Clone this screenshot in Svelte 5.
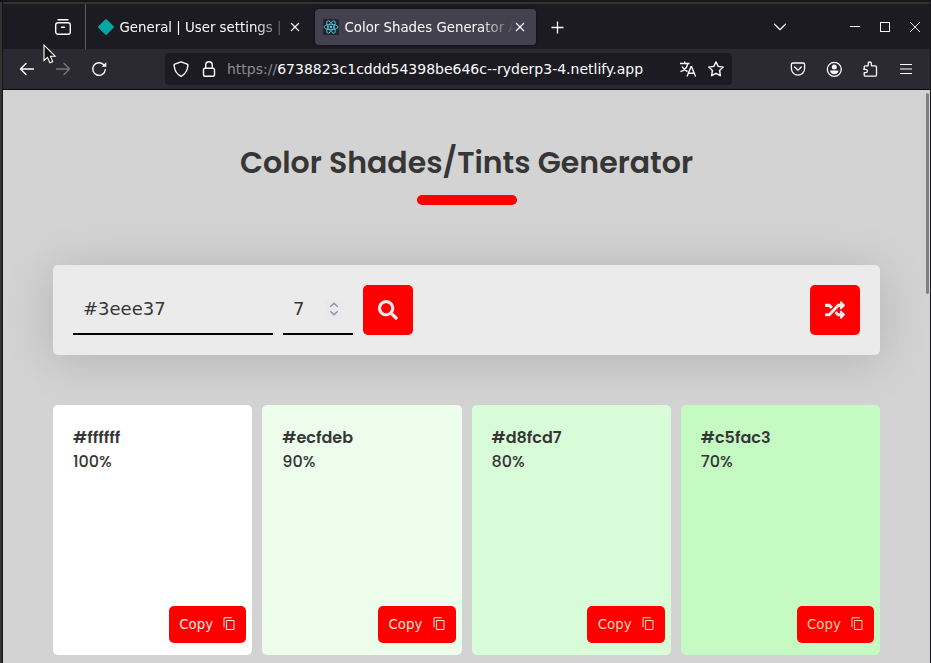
<script>
  const shades = [
    { hex: '#ffffff', weight: '100%', ink: '#f8e4e2' },
    { hex: '#ecfdeb', weight: '90%', ink: '#f2e3d0' },
    { hex: '#d8fcd7', weight: '80%', ink: '#f4d4bc' },
    { hex: '#c5fac3', weight: '70%', ink: '#f3cba8' }
  ];
</script>

<div class="window">
  <header class="tabs">
    <div class="view">
      <svg width="16" height="16" viewBox="0 0 16 16" fill="none" stroke="#fbfbfe" stroke-width="1.4" stroke-linecap="round"><path d="M3 .7h10M6.5 8.200h3" /><rect x=".7" y="3.700" width="14.6" height="11.500" rx="2.2" /></svg>
    </div>
    <div class="tab first">
      <svg width="16" height="16" viewBox="0 0 16 16"><path d="M7.2.5a1.2 1.2 0 0 1 1.6 0l6.8 6.7a1.2 1.2 0 0 1 0 1.6l-6.8 6.7a1.2 1.2 0 0 1-1.6 0L.4 8.8a1.2 1.2 0 0 1 0-1.6z" fill="#05a6a3" /></svg>
      <span class="label">General | User settings |</span>
      <svg class="close" width="10" height="10" viewBox="0 0 10 10" stroke="#fbfbfe" stroke-width="1.15"><path d="M1 1l8 8M9 1L1 9" /></svg>
    </div>
    <div class="tab active">
      <svg width="16" height="16" viewBox="0 0 16 16" fill="none" stroke="#61cde8" stroke-width=".8"><rect width="16" height="16" rx="1" fill="#20272b" stroke="none" /><ellipse cx="8" cy="8" rx="7" ry="2.7" /><ellipse cx="8" cy="8" rx="7" ry="2.7" transform="rotate(60 8 8)" /><ellipse cx="8" cy="8" rx="7" ry="2.7" transform="rotate(120 8 8)" /><circle cx="8" cy="8" r="1.2" fill="#61cde8" stroke="none" /></svg>
      <span class="label">Color Shades Generator A</span>
      <svg class="close" width="10" height="10" viewBox="0 0 10 10" stroke="#fbfbfe" stroke-width="1.15"><path d="M1 1l8 8M9 1L1 9" /></svg>
    </div>
    <svg class="plus" width="13" height="13" viewBox="0 0 13 13" stroke="#fbfbfe" stroke-width="1.3"><path d="M6.5 .5v12M.5 6.5h12" /></svg>
    <div class="controls">
      <svg width="14" height="8" viewBox="0 0 14 8" fill="none" stroke="#fbfbfe" stroke-width="1.3" stroke-linecap="round"><path d="M1.5 1.2L7 6.6l5.500-5.400" /></svg>
      <svg class="min" width="10" height="10" viewBox="0 0 10 10" stroke="#fff"><path d="M0 4.500h10" /></svg>
      <svg width="10" height="10" viewBox="0 0 10 10" fill="none" stroke="#fff"><rect x=".5" y=".5" width="9" height="9" /></svg>
      <svg width="10" height="10" viewBox="0 0 10 10" stroke="#fff" stroke-width=".9"><path d="M0 0l10 10M10 0L0 10" /></svg>
    </div>
  </header>

  <nav>
    <div class="history">
      <svg width="16" height="16" viewBox="0 0 16 16" fill="none" stroke="#fbfbfe" stroke-width="1.4" stroke-linecap="round" stroke-linejoin="round"><path d="M14.500 8H1.500M7 2.500L1.500 8 7 13.500" /></svg>
      <svg width="16" height="16" viewBox="0 0 16 16" fill="none" stroke="#76757e" stroke-width="1.4" stroke-linecap="round" stroke-linejoin="round"><path d="M1.500 8h13M9 2.500L14.500 8 9 13.500" /></svg>
      <svg width="16" height="16" viewBox="0 0 16 16" fill="none" stroke="#fbfbfe" stroke-width="1.4" stroke-linecap="round"><path d="M14.300 8.700a6.300 6.300 0 1 1-1.800-5.100" /><path d="M15.300 1.200v4.600h-4.600z" fill="#fbfbfe" stroke="none" /></svg>
    </div>
    <div class="address">
      <svg width="16" height="16" viewBox="0 0 16 16" fill="none" stroke="#fbfbfe" stroke-width="1.4" stroke-linejoin="round"><path d="M8 .8l6.200 2.300c.5.200.8.600.7 1.200-.3 4.800-2.600 8.900-6.900 11-4.300-2.100-6.600-6.200-6.900-11-.1-.6.200-1 .7-1.200z" /></svg>
      <svg class="lock" width="16" height="16" viewBox="0 0 16 16" fill="none" stroke="#fbfbfe" stroke-width="1.4"><rect x="2.500" y="7.200" width="11" height="8" rx="1.500" /><path d="M4.700 7V4a3.300 3.300 0 0 1 6.600 0v3" /></svg>
      <span class="url"><i>https://</i>6738823c1cddd54398be646c--ryderp3-4.netlify.app</span>
      <svg class="translate" width="16" height="16" viewBox="0 0 16 16" fill="none" stroke="#fbfbfe" stroke-width="1.4"><path d="M0 2.500h9.500M4.700.5v2M2 5.500c1 2 3.500 4 5.500 5M7.700 2.800C7 6.500 4 9.500.5 10.700M7 15.500l4-9.700h.6l4 9.700M8.500 12.300h5.500" /></svg>
      <svg width="16" height="16" viewBox="0 0 16 16" fill="none" stroke="#fbfbfe" stroke-width="1.4" stroke-linejoin="round"><path d="M8 .9l2.200 4.500 5 .7-3.600 3.500.8 5L8 12.300l-4.400 2.300.8-5L.8 6.100l5-.7z" /></svg>
    </div>
    <div class="tools">
      <svg width="16" height="16" viewBox="0 0 16 16" fill="none" stroke="#fbfbfe" stroke-width="1.3" stroke-linecap="round" stroke-linejoin="round"><path d="M2.900 2h10.200a1.500 1.500 0 0 1 1.500 1.500v4a6.600 6.600 0 0 1-13.200 0v-4A1.500 1.500 0 0 1 2.900 2z" /><path d="M4.700 6L8 9.200 11.300 6" /></svg>
      <svg width="16" height="16" viewBox="0 0 16 16"><circle cx="8.300" cy="8.300" r="7" fill="none" stroke="#fbfbfe" stroke-width="1.3" /><circle cx="8.300" cy="6.100" r="2.500" fill="#fbfbfe" /><path d="M4.500 9.600h7.600c.4 0 .5.300.4.700a4.500 4.500 0 0 1-8.400 0c-.1-.4 0-.7.400-.7z" fill="#fbfbfe" /></svg>
      <svg width="16" height="16" viewBox="0 0 16 16" fill="none" stroke="#fbfbfe" stroke-width="1.3" stroke-linejoin="round"><path d="M2.200 7.800V6c0-.8.400-1.200 1.200-1.200h2.800V2.600a1.600 1.600 0 0 1 3.200 0v2.200h3.800c.8 0 1.300.5 1.300 1.300v7.800c0 .8-.5 1.300-1.300 1.300H3.400c-.8 0-1.200-.5-1.200-1.200v-2.400h1.500a1.600 1.600 0 0 0 0-3.300H1.200" /></svg>
      <svg width="16" height="16" viewBox="0 0 16 16" stroke="#fbfbfe" stroke-width="1.2"><path d="M2 3.500h12M2 8h12M2 12.500h12" /></svg>
    </div>
  </nav>

  <main>
    <h1>Color Shades/Tints Generator</h1>
    <div class="underline"></div>
    <form class="panel">
      <div class="field color">#3eee37</div>
      <div class="field count">
        <span>7</span>
        <span class="spin"><svg width="10" height="14" viewBox="0 0 10 14" fill="none" stroke="#8f8f9d" stroke-width="1.400"><path d="M1.300 4.800L5 1.200l3.700 3.600M1.300 9.200L5 12.800l3.700-3.600" /></svg></span>
      </div>
      <button type="button" class="square" aria-label="Search">
        <svg width="20" height="20" viewBox="0 0 512 512" fill="#f4eaea"><path d="M505 442.700L405.300 343c-4.500-4.500-10.600-7-17-7H372c27.600-35.300 44-79.700 44-128C416 93.100 322.900 0 208 0S0 93.100 0 208s93.100 208 208 208c48.300 0 92.700-16.400 128-44v16.300c0 6.400 2.500 12.500 7 17l99.700 99.700c9.400 9.400 24.600 9.400 33.900 0l28.300-28.300c9.400-9.400 9.400-24.600.1-34zM208 336c-70.700 0-128-57.200-128-128 0-70.700 57.200-128 128-128 70.700 0 128 57.200 128 128 0 70.700-57.200 128-128 128z" /></svg>
      </button>
      <button type="button" class="square random" aria-label="Random color">
        <svg width="20" height="20" viewBox="0 0 512 512" fill="#f4eaea"><path d="M504.971 359.029c9.373 9.373 9.373 24.569 0 33.941l-80 79.984c-15.010 15.010-40.971 4.490-40.971-16.971V416h-58.785a12.004 12.004 0 0 1-8.773-3.812l-70.556-75.596 53.333-57.143L352 336h32v-39.981c0-21.438 25.943-31.998 40.971-16.971l80 79.981zM12 176h84l52.781 56.551 53.333-57.143-70.556-75.596A11.999 11.999 0 0 0 122.785 96H12c-6.627 0-12 5.373-12 12v56c0 6.627 5.373 12 12 12zm372 0v39.984c0 21.460 25.961 31.980 40.971 16.971l80-79.984c9.373-9.373 9.373-24.569 0-33.941l-80-79.981C409.943 24.021 384 34.582 384 56.019V96h-58.785a12.004 12.004 0 0 0-8.773 3.812L96 336H12c-6.627 0-12 5.373-12 12v56c0 6.627 5.373 12 12 12h110.785c3.326 0 6.503-1.381 8.773-3.812L352 176h32z" /></svg>
      </button>
    </form>
    <section class="cards">
      {#each shades as shade}
        <article style:background={shade.hex}>
          <h2>{shade.hex}</h2>
          <p>{shade.weight}</p>
          <button type="button" class="copy" style:color={shade.ink}>
            Copy
            <svg width="13" height="14" viewBox="0 0 13 14" fill="none" stroke="currentColor" stroke-width="1.100"><rect x="3.500" y="3.500" width="7.500" height="9" rx=".5" /><path d="M1 10.200V1.700q0-.9.900-.9h7" /></svg>
          </button>
        </article>
      {/each}
    </section>
    <div class="scrollbar"></div>
  </main>

  <svg class="cursor" width="14" height="21" viewBox="0 0 14 21"><path d="M1 1v15.500l3.500-3.200 2.400 5.500 2.800-1.200-2.300-5.400h4.700z" fill="#111" stroke="#fff" stroke-width="1.100" /></svg>
</div>

<style>
  :global(body) { margin: 0; background: #111; }
  .window {
    box-sizing: border-box; position: relative; width: 931px; height: 663px; overflow: hidden;
    padding: 2px 1px 0 0; background: #161618;
    display: flex; flex-direction: column;
    font-family: "DejaVu Sans", sans-serif;
  }
  svg { display: block; flex: none; }
  .tabs, nav, main { box-sizing: border-box; margin-left: 3px; width: 927px; flex: none; }
  .tabs { height: 47px; border-top: 2px solid #333; background: #1c1b22; display: flex; align-items: center; }
  .window::before { content: ""; position: absolute; left: 0; top: 2px; width: 2px; bottom: 0; background: #333; }
  .view { box-sizing: border-box; width: 83px; height: 45px; border-right: 1px solid #5b5b60; padding: 15px 0 0 52px; }
  .tab { box-sizing: border-box; display: flex; align-items: center; height: 36px; border-radius: 4px; color: #fbfbfe; font-size: 13.333px; }
  .first { width: 222px; padding-left: 12px; }
  .active { width: 221px; margin-left: 7px; padding-left: 8px; background: #42414d; box-shadow: 0 0 3px #0008; }
  .label { margin-left: 5.500px; width: 170px; padding-top: 2px; margin-right: -5.500px; white-space: nowrap; -webkit-mask-image: linear-gradient(to right, #000 135px, transparent 170px); mask-image: linear-gradient(to right, #000 135px, transparent 170px); }
  .close { margin-left: 6px; }
  .plus { margin-left: 15px; position: relative; top: 1px; }
  .controls { margin-left: auto; padding-right: 10px; display: flex; align-items: center; gap: 20px; }
  .controls .min { margin-left: 43px; }
  nav { height: 41px; border-bottom: 1px solid #0c0c0d; background: #2b2a33; display: flex; align-items: center; }
  .history { display: flex; gap: 20px; padding-left: 16px; width: 146px; }
  .address { box-sizing: border-box; width: 567px; height: 32px; border-radius: 4px; background: #1c1b22; padding: 0 8px; display: flex; align-items: center; }
  .lock { margin-left: 12px; }
  .url { margin-left: 10px; font-size: 14px; color: #fbfbfe; white-space: nowrap; }
  .url i { font-style: normal; color: #8c8b92; }
  .translate { margin-left: auto; margin-right: 12px; }
  .tools { margin-left: auto; padding-right: 16px; display: flex; gap: 20px; }
  main { position: relative; height: 573px; background: #d3d3d3; padding: 50px 50px 0; font-family: Poppins, "Open Sans", sans-serif; color: #363636; }
  h1 { margin: 0; height: 45px; line-height: 45px; text-align: center; font-size: 30px; font-weight: 600; white-space: nowrap; }
  .underline { width: 100px; height: 10px; margin: 10px auto 0; border-radius: 5px; background: #f00; }
  .panel { box-sizing: border-box; width: 827px; height: 90px; margin-top: 60px; padding: 20px; border-radius: 5px; background: #ebebeb; box-shadow: 0 5px 50px rgba(0, 0, 0, .16); display: flex; gap: 10px; }
  .field { box-sizing: border-box; height: 50px; padding: 0 10px 2px; border-bottom: 2px solid #000; display: flex; align-items: center; font-family: "DejaVu Sans", sans-serif; font-size: 18px; color: #363636; }
  .color { width: 200px; }
  .count { width: 70px; justify-content: space-between; }
  .spin { width: 18px; height: 18px; margin-top: 2px; background: #e9e9ed; display: flex; align-items: center; justify-content: center; }
  .square { width: 50px; height: 50px; padding: 0; border: 0; border-radius: 5px; background: #f00; display: flex; align-items: center; justify-content: center; }
  .random { margin-left: auto; }
  .cards { margin-top: 50px; width: 827px; display: grid; grid-template-columns: repeat(4, 1fr); gap: 10px; }
  article { box-sizing: border-box; height: 250px; border-radius: 5px; padding: 21px 6px 12px 20px; display: flex; flex-direction: column; }
  h2, p { margin: 0; font-size: 16px; line-height: 24px; }
  h2 { font-weight: 600; }
  p { font-weight: 500; }
  .copy { box-sizing: border-box; margin: auto 0 0 auto; width: 77.300px; height: 37px; padding: 0 10px 0 10.300px; border: 0; border-radius: 5px; background: #f00; font: 13.333px "DejaVu Sans", sans-serif; display: flex; align-items: center; justify-content: space-between; }
  .copy svg { margin-bottom: 2px; }
  .scrollbar { position: absolute; right: 1px; top: 3px; width: 3px; height: 201px; border-radius: 2px; background: #7e8080; }
  .cursor { position: absolute; left: 43px; top: 44px; }
</style>
